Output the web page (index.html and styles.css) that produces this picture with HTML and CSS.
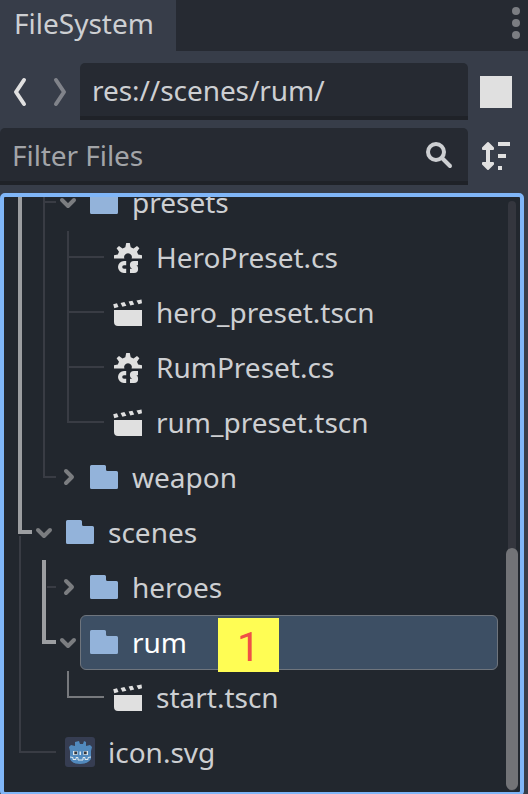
FILE: index.html
```html
<!DOCTYPE html>
<html lang="en">
<head>
<meta charset="utf-8">
<title>FileSystem</title>
<link rel="stylesheet" href="styles.css">
</head>
<body>
<svg class="defs" width="0" height="0" aria-hidden="true">
  <symbol id="folder" viewBox="0 0 32 32"><path fill="#93b3da" d="M3.500 4H16.500Q18 4 18 5.500V8.500Q18 10 19.500 10H28.500Q30 10 30 11.500V26.500Q30 28 28.500 28H3.500Q2 28 2 26.500V5.500Q2 4 3.500 4Z"/></symbol>
  <symbol id="scene" viewBox="0 0 32 32"><path fill="#e0e0e0" d="M2 14H30V30H6Q2 30 2 26ZM1.200 8.300L5 7.300 6.500 11 2.300 12.200ZM8.600 7L12.400 6 14.400 9.700 10.400 10.700ZM16.600 5.600L20.400 4.700 22.200 8.400 18.400 9.400ZM24.500 4.400L29.500 3.400 30 7.300 26.500 8.200Z"/></symbol>
  <symbol id="script" viewBox="0 0 32 32">
    <path fill="#e0e0e0" d="M14.200 2H17.800L18.700 6.200 21.500 7.400 25 4.900 27.400 7.300 25 10.700 26.200 13.600 30 14.300V17.600H19.600A3.900 3.900 0 1 0 12.400 17.600H2V14.300L5.800 13.600 7 10.700 4.600 7.300 7 4.900 10.500 7.400 13.300 6.200Z"/>
    <path fill="none" stroke="#e0e0e0" stroke-width="4.200" d="M14.200 22.100H12A3.900 3.900 0 0 0 12 29.900H14.200M26 22.100H22Q20 22.100 20 24T22.200 25.900Q24 25.900 24 27.900T22 29.900H18"/>
  </symbol>
  <symbol id="down" viewBox="0 0 24 32"><path class="chevron" d="M6 14L12 20 18 14"/></symbol>
  <symbol id="right" viewBox="0 0 24 32"><path class="chevron" d="M10 10L16 16 10 22"/></symbol>
</svg>
<div class="dock">
  <header class="tabs">
    <div class="tab">FileSystem</div>
    <svg class="more" width="8" height="32" viewBox="0 0 8 32"><g fill="#7b7d82"><circle cx="4" cy="4" r="4"/><circle cx="4" cy="16" r="4"/><circle cx="4" cy="28" r="4"/></g></svg>
  </header>
  <div class="bar">
    <svg class="nav" width="80" height="56" viewBox="0 0 80 56" fill="none" stroke-width="4" stroke-linecap="round" stroke-linejoin="round"><path stroke="#e0e0e0" d="M24 16L16 28 24 40"/><path stroke="#80838a" d="M56 16L64 28 56 40"/></svg>
    <div class="field path">res://scenes/rum/</div>
    <div class="toggle"></div>
  </div>
  <div class="bar">
    <div class="field filter"><span>Filter Files</span>
      <svg width="28" height="28" viewBox="0 0 28 28" fill="none" stroke="#cdcfd2" stroke-width="4"><circle cx="11" cy="11" r="8"/><path stroke-linecap="round" d="M17 17L25 25"/></svg>
    </div>
    <svg class="sort" width="32" height="32" viewBox="0 0 32 32" fill="#e0e0e0"><path d="M18 2H30V6H18ZM18 14H26V18H18ZM18 26H22V30H18Z"/><path stroke="#e0e0e0" stroke-width="2" stroke-linejoin="round" d="M8 3L13 8V9H9V23H13V24L8 29 3 24V23H7V9H3V8Z"/></svg>
  </div>
  <main class="tree">
    <svg class="guides" width="516" height="597" viewBox="4 197 516 597" fill="none" stroke-width="2">
      <path stroke="#393c44" d="M44 197V477H56M44 202H56M68 231V422H104M68 257H104M68 312H104M68 367H104M20 536V752H56M47 587H56"/>
      <path stroke="#77797d" d="M68 671V697H104"/>
      <path stroke="#9c9ea1" stroke-width="4" d="M20 197V532H32M44 560V642H56"/>
    </svg>
    <div class="rows">
      <div class="row l2"><svg class="arrow"><use href="#down"/></svg><div class="item"><svg class="icon"><use href="#folder"/></svg>presets</div></div>
      <div class="row l3"><div class="item"><svg class="icon"><use href="#script"/></svg>HeroPreset.cs</div></div>
      <div class="row l3"><div class="item"><svg class="icon"><use href="#scene"/></svg>hero_preset.tscn</div></div>
      <div class="row l3"><div class="item"><svg class="icon"><use href="#script"/></svg>RumPreset.cs</div></div>
      <div class="row l3"><div class="item"><svg class="icon"><use href="#scene"/></svg>rum_preset.tscn</div></div>
      <div class="row l2"><svg class="arrow"><use href="#right"/></svg><div class="item"><svg class="icon"><use href="#folder"/></svg>weapon</div></div>
      <div class="row l1"><svg class="arrow"><use href="#down"/></svg><div class="item"><svg class="icon"><use href="#folder"/></svg>scenes</div></div>
      <div class="row l2"><svg class="arrow"><use href="#right"/></svg><div class="item"><svg class="icon"><use href="#folder"/></svg>heroes</div></div>
      <div class="row l2"><svg class="arrow"><use href="#down"/></svg><div class="item selected"><svg class="icon"><use href="#folder"/></svg>rum<span class="badge">1</span></div></div>
      <div class="row l3"><div class="item"><svg class="icon"><use href="#scene"/></svg>start.tscn</div></div>
      <div class="row l1 leaf"><div class="item"><svg class="icon" viewBox="0 0 32 32">
        <rect x="1" y="1" width="30" height="30" rx="3" fill="#363d52"/>
        <path fill="#5189bd" d="M5 11L7 9 11 10V6L15 5 16 8 19 8 20 5 22 6V10L26 9 28 11 27 15V23Q24 28 16 28T6 23V15Z"/>
        <path fill="#dfe9ef" d="M9 15H13.500V19H9ZM19.500 15H24V19H19.500ZM15.500 15.500H17V19H15.500Z"/>
        <path fill="#33363d" d="M10.300 15.500H13V18.300H10.300ZM20 15.500H22.700V18.300H20Z"/>
        <path fill="none" stroke="#dfe9ef" stroke-width="1" d="M6 21L9 21.500V23.500H12V21.500H14V24H19V21.500H21V23.500H24V21.500L27 21"/>
      </svg>icon.svg</div></div>
    </div>
    <div class="scrollbar"><div class="thumb"></div></div>
  </main>
</div>
</body>
</html>
```
FILE: styles.css
```css
* { box-sizing: border-box; }
body {
  margin: 0;
  background: #373d49;
  color: #cdcfd2;
  font: 28px/38px "Noto Sans", sans-serif;
}
svg { display: block; flex: none; }
.defs { position: absolute; }
.dock {
  height: 794px;
  display: flex;
  flex-direction: column;
  gap: 8px;
  overflow: hidden;
}
.tabs {
  display: flex;
  flex: none;
  justify-content: space-between;
  height: 51px;
  margin-bottom: 4px;
  background: #262a32;
}
.tab { width: 176px; padding: 4px 0 0 14px; background: #373d49; white-space: nowrap; }
.more { margin: 7px 8px 0 0; }
.bar { display: flex; align-items: center; height: 57px; flex: none; }
.field {
  height: 57px;
  padding: 8px 12px 0;
  background: #262a32;
  border-bottom: 4px solid #1f2228;
  border-radius: 5px 5px 0 0;
}
.path { width: 388px; letter-spacing: -0.06px; }
.filter { width: 468px; display: flex; justify-content: space-between; color: #a2a4a8; letter-spacing: -0.06px; }
.filter svg { margin: 5px 3px 0 0; }
.toggle { width: 32px; height: 32px; margin-left: 12px; background: #e0e0e0; }
.sort { margin: 0 0 1px 12px; }
.tree {
  position: relative;
  display: flex;
  flex: none;
  width: 524px;
  height: 603px;
  border: 4px solid #80b6f8;
  border-radius: 5px;
  background: #22272e;
  overflow: hidden;
}
.guides { position: absolute; left: 0; top: 0; }
/* The list is scrolled part-way into its first visible row. */
.rows { position: relative; width: 494px; margin-top: -22px; flex: none; }
.row { display: flex; height: 55px; }
.l1 { padding-left: 28px; }
.l2 { padding-left: 52px; }
.l3 { padding-left: 100px; }
.leaf { padding-left: 52px; }
.arrow { width: 24px; height: 32px; margin-top: 11px; }
.chevron { fill: none; stroke: #7b7d80; stroke-width: 4; stroke-linecap: round; stroke-linejoin: round; }
.item { display: flex; flex: 1; padding: 8px 0 0 8px; white-space: nowrap; }
.icon { width: 32px; height: 32px; margin: 3px 12px 0 0; }
.selected {
  padding: 7px 0 0 7px;
  border: 1px solid #6f757d;
  border-radius: 6px;
  background: #3d4f64;
  color: #fff;
}
.badge {
  width: 61px;
  height: 54px;
  margin: -5px 0 0 31px;
  background: #fffd54;
  color: #ef5146;
  font: 41px/58px Roboto, sans-serif;
  text-align: center;
}
.scrollbar { width: 8px; height: 590px; margin: 4px 0 0 10px; padding-top: 347px; border-radius: 4px; background: #34363e; }
.thumb { width: 12px; height: 242px; margin-left: -2px; border-radius: 6px; background: #727377; }
```
